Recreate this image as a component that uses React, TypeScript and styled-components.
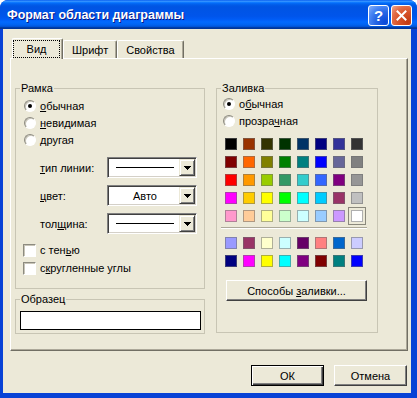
import React from 'react';
import styled, { createGlobalStyle } from 'styled-components';

const FONT = `'Liberation Sans', Arial, 'Noto Sans', sans-serif`;

const GlobalStyle = createGlobalStyle`
  html, body {
    margin: 0;
    padding: 0;
    background: #ffffff;
  }
  body {
    font-family: ${FONT};
    font-size: 11px;
    color: #000;
  }
  * {
    box-sizing: border-box;
  }
`;

const basicColors = [
  ['#000000', '#993300', '#333300', '#003300', '#003366', '#000080', '#333399', '#333333'],
  ['#800000', '#FF6600', '#808000', '#008000', '#008080', '#0000FF', '#666699', '#808080'],
  ['#FF0000', '#FF9900', '#99CC00', '#339966', '#33CCCC', '#3366FF', '#800080', '#969696'],
  ['#FF00FF', '#FFCC00', '#FFFF00', '#00FF00', '#00FFFF', '#00CCFF', '#993366', '#C0C0C0'],
  ['#FF99CC', '#FFCC99', '#FFFF99', '#CCFFCC', '#CCFFFF', '#99CCFF', '#CC99FF', '#FFFFFF'],
].flat();

const chartColors = [
  '#9999FF', '#993366', '#FFFFCC', '#CCFFFF', '#660066', '#FF8080', '#0066CC', '#CCCCFF',
  '#000080', '#FF00FF', '#FFFF00', '#00FFFF', '#800080', '#800000', '#008080', '#0000FF',
];

function Combo({ children }: { children: React.ReactNode }) {
  return (
    <ComboBox>
      <ComboValue>{children}</ComboValue>
      <ComboArrow>
        <svg width="7" height="4" viewBox="0 0 7 4" shapeRendering="crispEdges">
          <polygon points="0,0 7,0 3.5,4" fill="#000" />
        </svg>
      </ComboArrow>
    </ComboBox>
  );
}

function Radio({ checked, children }: { checked?: boolean; children: React.ReactNode }) {
  return (
    <OptionRow>
      <RadioMark $checked={!!checked} />
      <span>{children}</span>
    </OptionRow>
  );
}

function Check({ children }: { children: React.ReactNode }) {
  return (
    <CheckRow>
      <CheckMark />
      <span>{children}</span>
    </CheckRow>
  );
}

export default function App() {
  return (
    <>
      <GlobalStyle />
      <Window>
        <TitleBar>
          <Title>Формат области диаграммы</Title>
          <CaptionButtons>
            <CaptionButton $kind="help">?</CaptionButton>
            <CaptionButton $kind="close">
              <svg width="11" height="11" viewBox="0 0 11 11">
                <path d="M1.5 1.5l8 8M9.5 1.5l-8 8" stroke="#fff" strokeWidth="2" strokeLinecap="square" />
              </svg>
            </CaptionButton>
          </CaptionButtons>
        </TitleBar>
        <Frame>
          <Body>
            <TabStrip>
              <Tab $active>
                <TabLabel $focused>Вид</TabLabel>
              </Tab>
              <Tab>
                <TabLabel>Шрифт</TabLabel>
              </Tab>
              <Tab>
                <TabLabel>Свойства</TabLabel>
              </Tab>
            </TabStrip>
            <Panel>
              <Column>
                <Group $width={190} $height={201}>
                  <GroupTitle>Рамка</GroupTitle>
                  <OptionList $indent={8} $top={2}>
                    <Radio checked>
                      <u>о</u>бычная
                    </Radio>
                    <Radio>
                      <u>н</u>евидимая
                    </Radio>
                    <Radio>другая</Radio>
                  </OptionList>
                  <FieldGrid>
                    <FieldLabel>
                      <u>т</u>ип линии:
                    </FieldLabel>
                    <Combo>
                      <LineSample />
                    </Combo>
                    <FieldLabel>
                      <u>ц</u>вет:
                    </FieldLabel>
                    <Combo>Авто</Combo>
                    <FieldLabel>
                      тол<u>щ</u>ина:
                    </FieldLabel>
                    <Combo>
                      <LineSample />
                    </Combo>
                  </FieldGrid>
                  <CheckList>
                    <Check>
                      с тен<u>ь</u>ю
                    </Check>
                    <Check>
                      с<u>к</u>ругленные углы
                    </Check>
                  </CheckList>
                </Group>
                <Group $width={190} $height={35}>
                  <GroupTitle>Образец</GroupTitle>
                  <SampleBox />
                </Group>
              </Column>
              <Group $width={162} $height={245}>
                <GroupTitle>Заливка</GroupTitle>
                <OptionList $indent={6} $top={0}>
                  <Radio checked>
                    о<u>б</u>ычная
                  </Radio>
                  <Radio>
                    прозра<u>ч</u>ная
                  </Radio>
                </OptionList>
                <Palette $top={9}>
                  {basicColors.map((c, i) => (
                    <Swatch key={i} $color={c} $selected={i === basicColors.length - 1} />
                  ))}
                </Palette>
                <Separator />
                <Palette $top={8}>
                  {chartColors.map((c, i) => (
                    <Swatch key={i} $color={c} />
                  ))}
                </Palette>
                <WideButton>
                  Способы <u>з</u>аливки...
                </WideButton>
              </Group>
            </Panel>
            <Footer>
              <DialogButton $default>ОК</DialogButton>
              <DialogButton>Отмена</DialogButton>
            </Footer>
          </Body>
        </Frame>
      </Window>
    </>
  );
}

const Window = styled.div`
  width: 417px;
  height: 398px;
  display: flex;
  flex-direction: column;
  background: #0842d6;
  border-radius: 8px 8px 0 0;
  overflow: hidden;
`;

const TitleBar = styled.div`
  height: 29px;
  flex-shrink: 0;
  display: flex;
  align-items: center;
  padding: 1px 5px 0 7px;
  background: linear-gradient(
    to bottom,
    #0058ee 0%,
    #3a93ff 4%,
    #288eff 6%,
    #127dff 8%,
    #036ffc 10%,
    #0262ee 14%,
    #0057e5 20%,
    #0054e3 24%,
    #0055eb 56%,
    #005bf5 66%,
    #026afe 76%,
    #0062ef 86%,
    #0052d6 92%,
    #0040ab 94%,
    #003092 100%
  );
`;

const Title = styled.div`
  flex: 1;
  font-family: ${FONT};
  font-weight: bold;
  font-size: 12.5px;
  color: #fff;
  text-shadow: 1px 1px 0 #0a1883;
  white-space: nowrap;
`;

const CaptionButtons = styled.div`
  display: flex;
  gap: 2px;
`;

const CaptionButton = styled.div<{ $kind: 'help' | 'close' }>`
  width: 21px;
  height: 21px;
  display: flex;
  align-items: center;
  justify-content: center;
  border: 1px solid #fff;
  border-radius: 3px;
  color: #fff;
  font-family: ${FONT};
  font-weight: bold;
  font-size: 15px;
  background: ${({ $kind }) =>
    $kind === 'close'
      ? 'radial-gradient(circle at 85% 85%, #c13a12 0%, #d8542a 45%, #e26d48 70%, #f0a890 100%)'
      : 'radial-gradient(circle at 85% 85%, #0a48d8 0%, #2a68e6 45%, #4a86f4 70%, #8ab2f8 100%)'};
`;

const Frame = styled.div`
  flex: 1;
  display: flex;
  padding: 0 6px 5px 3px;
`;

const Body = styled.div`
  flex: 1;
  display: flex;
  flex-direction: column;
  background: #ece9d8;
  padding: 9px 3px 0 7px;
`;

const TabStrip = styled.div`
  display: flex;
  align-items: flex-end;
  height: 21px;
  margin: 0 0 -1px 2px;
`;

const Tab = styled.div<{ $active?: boolean }>`
  position: relative;
  z-index: ${({ $active }) => ($active ? 1 : 0)};
  display: flex;
  min-width: ${({ $active }) => ($active ? '51px' : '0')};
  height: ${({ $active }) => ($active ? '21px' : '18px')};
  margin-bottom: ${({ $active }) => ($active ? '0' : '1px')};
  padding: ${({ $active }) => ($active ? '1px 2px 1px 0' : '0 3px')};
  background: #ece9d8;
  border-top: 1px solid #fff;
  border-left: 1px solid #fff;
  border-right: 1px solid #716f64;
  border-radius: 2px 2px 0 0;
  box-shadow: inset -1px 0 0 #aca899;
`;

const TabLabel = styled.span<{ $focused?: boolean }>`
  flex: 1;
  display: flex;
  align-items: center;
  justify-content: center;
  padding: 0 4px;
  border: 1px dotted ${({ $focused }) => ($focused ? '#000' : 'transparent')};
  white-space: nowrap;
`;

const Panel = styled.div`
  height: 293px;
  display: flex;
  gap: 11px;
  padding: 29px 0 0 4px;
  border-top: 1px solid #fff;
  border-left: 1px solid #fff;
  border-right: 1px solid #716f64;
  border-bottom: 1px solid #716f64;
  box-shadow: inset -1px -1px 0 #aca899;
`;

const Column = styled.div`
  display: flex;
  flex-direction: column;
  gap: 10px;
`;

const Group = styled.div<{ $width: number; $height: number }>`
  width: ${({ $width }) => $width}px;
  height: ${({ $height }) => $height}px;
  display: flex;
  flex-direction: column;
  align-items: flex-start;
  border: 1px solid #c8c5b4;
`;

const GroupTitle = styled.span`
  display: block;
  margin: -7px 0 0 4px;
  padding: 0 1px;
  line-height: 13px;
  background: #ece9d8;
`;

const OptionList = styled.div<{ $indent: number; $top: number }>`
  display: flex;
  flex-direction: column;
  margin-top: ${({ $top }) => $top}px;
  padding-left: ${({ $indent }) => $indent}px;
`;

const OptionRow = styled.div`
  height: 17px;
  display: flex;
  align-items: center;
  gap: 4px;
`;

const RadioMark = styled.span<{ $checked: boolean }>`
  width: 12px;
  height: 12px;
  display: flex;
  align-items: center;
  justify-content: center;
  border-radius: 50%;
  background: #fff;
  border: 1px solid;
  border-color: #8d8b80 #ffffff #ffffff #8d8b80;
  box-shadow: inset 1px 1px 0 #c8c5b8;

  &::after {
    content: '';
    width: 4px;
    height: 4px;
    border-radius: 50%;
    background: ${({ $checked }) => ($checked ? '#000' : 'transparent')};
  }
`;

const FieldGrid = styled.div`
  display: grid;
  grid-template-columns: 67px 90px;
  grid-auto-rows: 21px;
  row-gap: 7px;
  margin-top: 9px;
  padding-left: 24px;
`;

const FieldLabel = styled.span`
  display: flex;
  align-items: center;
`;

const ComboBox = styled.div`
  display: flex;
  width: 90px;
  height: 21px;
  padding: 1px;
  background: #fff;
  border: 1px solid;
  border-color: #808080 #ffffff #ffffff #808080;
  box-shadow: inset 1px 1px 0 #404040, inset -1px -1px 0 #d4d0c8;
`;

const ComboValue = styled.div`
  flex: 1;
  display: flex;
  align-items: center;
  justify-content: center;
  padding-left: 2px;
`;

const LineSample = styled.div`
  width: 58px;
  height: 1px;
  background: #000;
`;

const ComboArrow = styled.div`
  width: 16px;
  display: flex;
  align-items: center;
  justify-content: center;
  background: #ece9d8;
  border: 1px solid;
  border-color: #ece9d8 #404040 #404040 #ece9d8;
  box-shadow: inset 1px 1px 0 #fff, inset -1px -1px 0 #808080;
`;

const CheckList = styled.div`
  display: flex;
  flex-direction: column;
  margin-top: 7px;
  padding-left: 7px;
`;

const CheckRow = styled.div`
  height: 18px;
  display: flex;
  align-items: center;
  gap: 4px;
`;

const CheckMark = styled.span`
  width: 13px;
  height: 13px;
  background: #fff;
  border: 1px solid;
  border-color: #8d8b80 #ffffff #ffffff #8d8b80;
  box-shadow: inset 1px 1px 0 #c8c5b8;
`;

const SampleBox = styled.div`
  width: 181px;
  height: 19px;
  margin: 5px 0 0 4px;
  background: #fff;
  border: 1px solid #000;
`;

const Palette = styled.div<{ $top: number }>`
  display: grid;
  grid-template-columns: repeat(8, 12px);
  grid-auto-rows: 12px;
  gap: 6px;
  margin-top: ${({ $top }) => $top}px;
  padding-left: 8px;
`;

const Swatch = styled.span<{ $color: string; $selected?: boolean }>`
  background: ${({ $color }) => $color};
  border: 1px solid rgba(110, 110, 110, 0.55);
  outline: ${({ $selected }) => ($selected ? '1px solid #8a887c' : 'none')};
  outline-offset: 2px;
`;

const Separator = styled.div`
  width: 146px;
  height: 2px;
  margin: 5px 0 0 4px;
  border-top: 1px solid #aca899;
  border-bottom: 1px solid #fff;
`;

const RaisedButton = styled.button`
  height: 21px;
  font-family: ${FONT};
  font-size: 11px;
  color: #000;
  background: #ece9d8;
  border: 1px solid;
  border-color: #fff #404040 #404040 #fff;
  box-shadow: inset -1px -1px 0 #808080;
  padding: 0;
`;

const WideButton = styled(RaisedButton)`
  width: 141px;
  margin: 13px 0 0 9px;
`;

const Footer = styled.div`
  display: flex;
  justify-content: flex-end;
  gap: 10px;
  margin-top: 14px;
  padding-right: 1px;
`;

const DialogButton = styled(RaisedButton)<{ $default?: boolean }>`
  width: 73px;
  border-color: ${({ $default }) => ($default ? '#000' : '#fff #404040 #404040 #fff')};
  box-shadow: ${({ $default }) =>
    $default
      ? 'inset 1px 1px 0 #fff, inset -1px -1px 0 #404040, inset -2px -2px 0 #808080'
      : 'inset -1px -1px 0 #808080'};
`;
